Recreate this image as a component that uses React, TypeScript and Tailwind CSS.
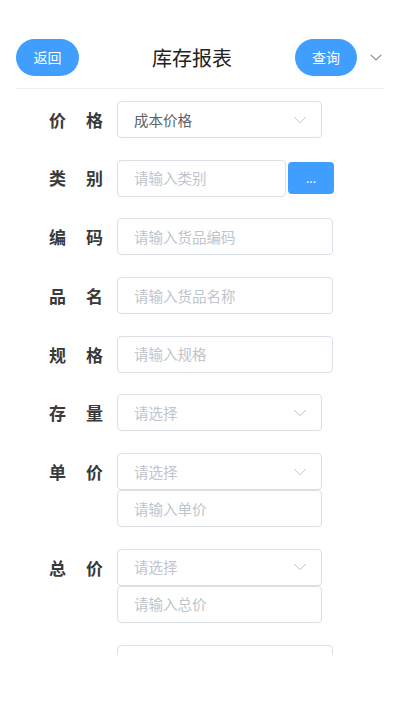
import React from "react";

const FONT = { fontFamily: '"Noto Sans CJK SC", "Noto Sans", sans-serif' };

function Chevron({ className = "" }: { className?: string }) {
  return (
    <svg width="14" height="8" viewBox="0 0 14 8" className={className}>
      <path d="M1 1 L7 6.6 L13 1" fill="none" stroke="#c0c4cc" strokeWidth="1" />
    </svg>
  );
}

function Label({ a, b }: { a: string; b: string }) {
  return (
    <div className="w-[54px] h-[37px] flex items-center justify-between text-[17px] font-semibold text-[#3a3a3a] shrink-0">
      <span>{a}</span>
      <span>{b}</span>
    </div>
  );
}

function Select({ value, placeholder }: { value?: string; placeholder?: string }) {
  return (
    <div className="w-[205px] h-[37px] border border-[#dcdfe6] rounded-[4px] flex items-center justify-between pl-[16px] pr-[14px] bg-white">
      <span className={`text-[14.5px] ${value ? "text-[#606266]" : "text-[#c0c4cc]"}`}>{value ?? placeholder}</span>
      <Chevron />
    </div>
  );
}

function Input({ placeholder, w = "w-[216px]" }: { placeholder: string; w?: string }) {
  return (
    <div className={`${w} h-[37px] border border-[#dcdfe6] rounded-[4px] flex items-center pl-[16px] bg-white`}>
      <span className="text-[14.5px] text-[#c0c4cc]">{placeholder}</span>
    </div>
  );
}

export default function App() {
  return (
    <div className="w-[400px] h-[711px] bg-white flex flex-col overflow-hidden" style={FONT}>
      <div className="mx-4 pt-[39px] pb-[12px] border-b border-[#eeeeee] flex items-center">
        <button className="w-[63px] h-[37px] rounded-full bg-[#409eff] text-white text-[14px] flex items-center justify-center">
          返回
        </button>
        <div className="flex-1 pl-[10px] text-center text-[20px] text-[#222]">库存报表</div>
        <button className="w-[62px] h-[37px] rounded-full bg-[#409eff] text-white text-[14px] flex items-center justify-center">
          查询
        </button>
        <svg width="12" height="7" viewBox="0 0 12 7" className="ml-[13px] mr-[2px]">
          <path d="M0.8 0.8 L6 6 L11.2 0.8" fill="none" stroke="#888" strokeWidth="1.1" />
        </svg>
      </div>

      <div className="h-[566px] overflow-hidden pt-[12px] pl-[49px] flex flex-col gap-[21.7px]">
        <div className="flex gap-[14px]">
          <Label a="价" b="格" />
          <Select value="成本价格" />
        </div>
        <div className="flex gap-[14px] items-center">
          <Label a="类" b="别" />
          <div className="flex items-center gap-[2px]">
            <Input placeholder="请输入类别" w="w-[169px]" />
            <button className="w-[46px] h-[32px] rounded-[4px] bg-[#409eff] text-white text-[12px] flex items-center justify-center leading-none">
              ...
            </button>
          </div>
        </div>
        <div className="flex gap-[14px]">
          <Label a="编" b="码" />
          <Input placeholder="请输入货品编码" />
        </div>
        <div className="flex gap-[14px]">
          <Label a="品" b="名" />
          <Input placeholder="请输入货品名称" />
        </div>
        <div className="flex gap-[14px]">
          <Label a="规" b="格" />
          <Input placeholder="请输入规格" />
        </div>
        <div className="flex gap-[14px]">
          <Label a="存" b="量" />
          <Select placeholder="请选择" />
        </div>
        <div className="flex gap-[14px]">
          <Label a="单" b="价" />
          <div className="flex flex-col">
            <Select placeholder="请选择" />
            <Input placeholder="请输入单价" w="w-[205px]" />
          </div>
        </div>
        <div className="flex gap-[14px]">
          <Label a="总" b="价" />
          <div className="flex flex-col">
            <Select placeholder="请选择" />
            <Input placeholder="请输入总价" w="w-[205px]" />
          </div>
        </div>
        <div className="flex gap-[14px]">
          <div className="w-[54px] shrink-0" />
          <Input placeholder="" />
        </div>
      </div>
    </div>
  );
}
